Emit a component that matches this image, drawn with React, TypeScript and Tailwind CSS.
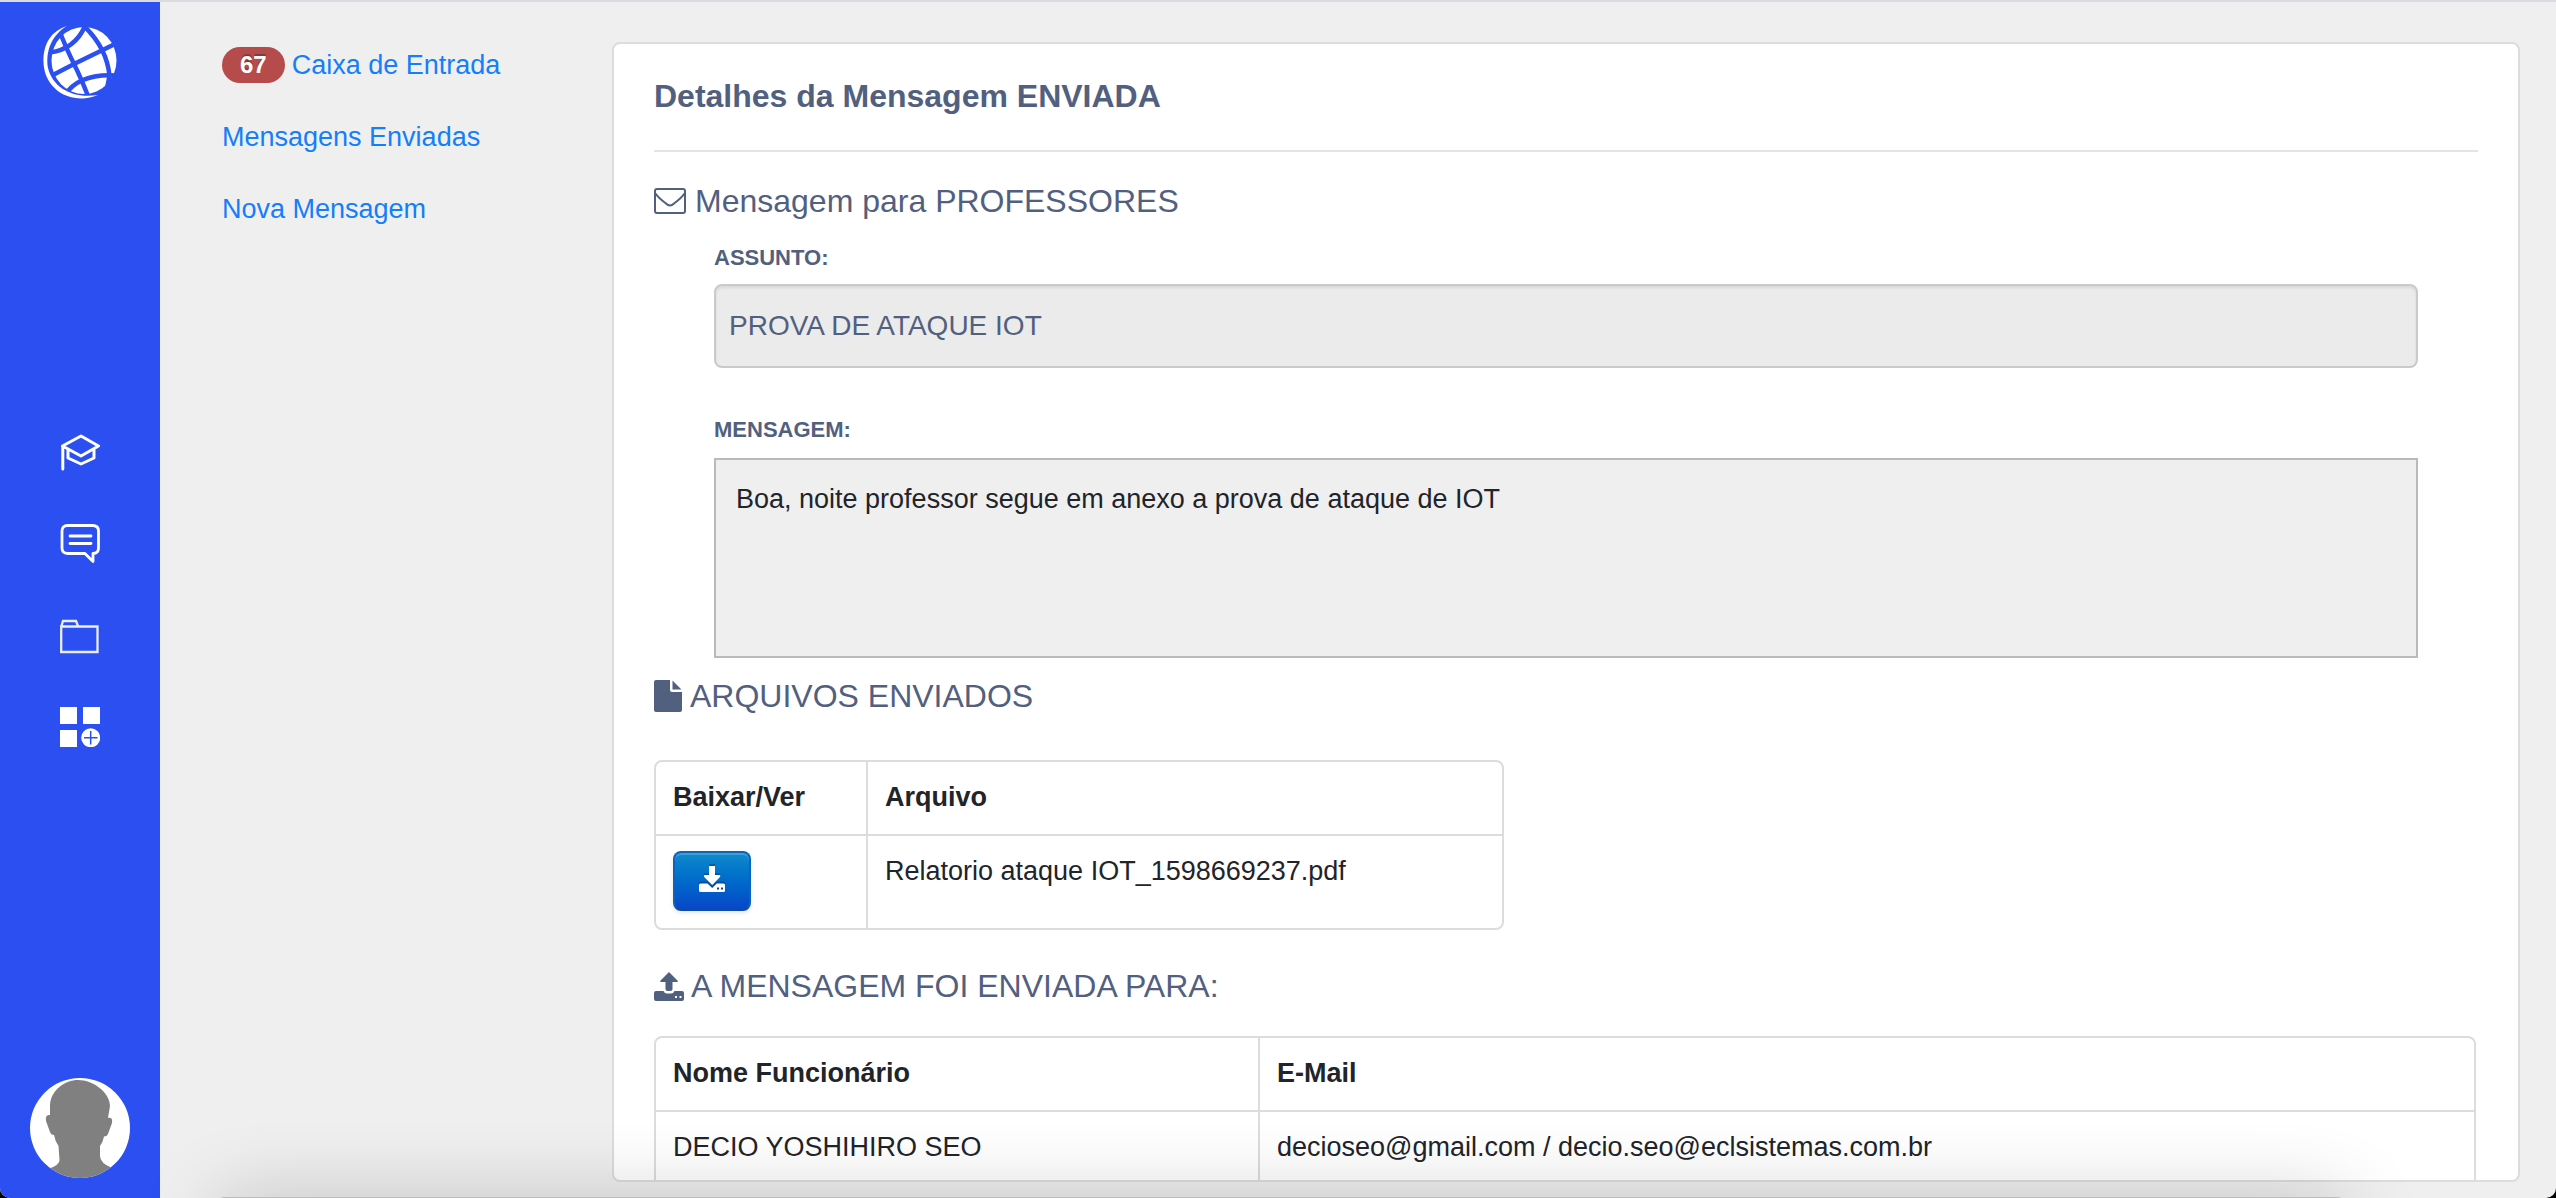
import type { ReactNode } from "react";

function SectionTitle({ icon, children, className }: { icon: ReactNode; children: ReactNode; className?: string }) {
  return (
    <h2 className={"flex items-center text-[32px] leading-[40px] text-[#52607f] " + (className ?? "")}>
      {icon}
      {children}
    </h2>
  );
}

function Logo() {
  return (
    <svg viewBox="0 0 74 74" className="h-[74px] w-[74px]" aria-hidden="true">
      <ellipse cx="41" cy="34.500" rx="32.500" ry="33.500" fill="#fff" />
      <g fill="none" stroke="#2c4ff1" strokeWidth="4.500">
        <path d="M16 4Q24 24 31 38Q38 52 45 70" />
        <path d="M41 0Q64 22 66.500 50L62 72" />
        <path d="M7 26.500Q32 23 42 0" />
        <path d="M8 50 31 38 74 17" />
        <path d="M22 69Q36 47 74 49.500" />
      </g>
      <path d="M68 52 60 66 74 74V52Z" fill="#2c4ff1" />
      <path d="M24 0C8 5 0 18 .5 36C1 58 18 73 40 72.500C46 72 50 71 55 69C30 73 10 62 5 42C2 24 10 8 24 0Z" fill="#fff" />
    </svg>
  );
}

const navItems: { label: string; icon: ReactNode }[] = [
  {
    label: "Acadêmico",
    icon: (
      <svg viewBox="0 0 40 40" className="size-10" fill="none" stroke="#fff" strokeWidth="3" strokeLinejoin="round" strokeLinecap="round">
        <path d="M2.500 15 21 5 38.500 15 21 25Z M2.800 15V38 M8 19V27L21 33 34 27V19" />
      </svg>
    ),
  },
  {
    label: "Mensagens",
    icon: (
      <svg viewBox="0 0 40 40" className="size-10" fill="none" stroke="#fff" strokeWidth="2.800" strokeLinejoin="round" strokeLinecap="round">
        <path d="M7.500 2.500H32.500Q38.500 2.500 38.500 8V25Q38.500 30.500 33 30.500V38.500L25 30.500H7.500Q2 30.500 2 25V8Q2 2.500 7.500 2.500Z M10 13H31 M10 20.500H31" />
      </svg>
    ),
  },
  {
    label: "Arquivos",
    icon: (
      <svg viewBox="0 0 40 40" className="size-10" fill="none" stroke="#fff" strokeOpacity="0.9" strokeWidth="2.300">
        <path d="M1.200 11.500V37H37.500V11.500Z M1.500 11 3 6H16L18 11" />
      </svg>
    ),
  },
  {
    label: "Aplicativos",
    icon: (
      <svg viewBox="0 0 40 40" className="size-10">
        <path d="M0 0H17V17H0Z M23 0H40V17H23Z M0 23H17V40H0Z" fill="#fff" />
        <circle cx="30.700" cy="30.700" r="9.500" fill="#fff" />
        <path d="M30.700 24V37.500 M24 30.700H37.500" stroke="#2c4ff1" strokeWidth="1.500" />
      </svg>
    ),
  },
];

const cell = "border-[#dcdcdc] px-[17px] text-left text-[27px] leading-[40px] align-top pt-[15px] pb-[17px] h-[74px]";

export default function App() {
  return (
    <div className="relative h-screen overflow-hidden bg-black font-['Liberation_Sans',Arial,sans-serif] text-[#212429]">
      <div className="flex h-full overflow-hidden rounded-b-[10px] border-t-2 border-[#dadae0] bg-[#efefef]">
        <aside className="flex w-40 shrink-0 flex-col items-center bg-[#2c4ff1] pt-6 pb-5">
          <a href="#" aria-label="Início"><Logo /></a>
          <nav className="flex grow flex-col items-center justify-center gap-[52px]">
            {navItems.map((n) => (
              <a key={n.label} href="#" aria-label={n.label}>{n.icon}</a>
            ))}
          </nav>
          <button aria-label="Perfil" className="size-[100px] overflow-hidden rounded-full bg-white">
            <svg viewBox="0 0 100 100" className="size-full">
              <path d="M20 37V27C21 12 35 2 48 2C64 2 80 15 80 28L78 40Q83 39 82 45L78 56Q77 58.500 74 58.500Q73 64 70 68V78Q70 85 82 90V100H18V91Q30 87 29.500 82L28.500 68Q25 63 24 57Q21 57 20 54L16 43Q15 36 20 37Z" fill="#808080" />
            </svg>
          </button>
        </aside>
        <nav className="flex w-[452px] shrink-0 flex-col gap-8 pt-[43px] pl-[62px] text-[27px] leading-[40px] text-[#147efb]">
          <a href="#" className="flex items-center gap-[7px]">
            <span className="rounded-full bg-[#b54b4a] px-[18px] text-2xl leading-[36px] font-bold text-white [text-shadow:0_-2px_0_rgba(0,0,0,0.25)]">67</span>
            Caixa de Entrada
          </a>
          <a href="#">Mensagens Enviadas</a>
          <a href="#">Nova Mensagem</a>
        </nav>
        <main className="mt-10 mr-9 mb-4 min-w-0 grow overflow-hidden rounded-lg border-2 border-[#dcdcdc] bg-white px-10 pt-8">
          <h1 className="text-[32px] leading-[40px] font-bold text-[#52607f]">Detalhes da Mensagem ENVIADA</h1>
          <hr className="mt-[34px] mb-[29px] border-t-2 border-[#e4e4e4]" />
          <SectionTitle
            icon={
              <svg viewBox="0 0 32 26" className="mr-[9px] h-[26px] w-8" fill="none" stroke="#52607f" strokeWidth="2">
                <rect x="1" y="1" width="30" height="24" rx="2" />
                <path d="M1.500 5.500Q4 9.500 12 15.500Q16 19.500 20 15.500Q28 9.500 30.500 5.500" />
              </svg>
            }
          >
            Mensagem para PROFESSORES
          </SectionTitle>
          <div className="px-[60px]">
            <label htmlFor="assunto" className="mt-[21px] block text-[22px] leading-[32px] font-bold text-[#52607f]">ASSUNTO:</label>
            <input
              id="assunto"
              readOnly
              value="PROVA DE ATAQUE IOT"
              className="mt-[10px] block h-[84px] w-full rounded-lg border-2 border-[#cacaca] bg-[#ebebeb] px-[13px] text-[28px] text-[#52607f] shadow-[inset_0_2px_3px_rgba(0,0,0,0.08)] outline-none"
            />
            <label htmlFor="mensagem" className="mt-[46px] block text-[22px] leading-[32px] font-bold text-[#52607f]">MENSAGEM:</label>
            <textarea
              id="mensagem"
              readOnly
              value="Boa, noite professor segue em anexo a prova de ataque de IOT"
              className="mt-3 block h-[200px] w-full resize-none border-2 border-[#bababa] bg-[#efefef] px-5 py-[19px] text-[27px] leading-[40px] outline-none"
            />
          </div>
          <SectionTitle
            className="mt-[18px]"
            icon={
              <svg viewBox="0 0 28 32" className="mr-2 h-8 w-7" fill="#52607f">
                <path d="M2 0H16V10Q16 12 18 12H28V30Q28 32 26 32H2Q0 32 0 30V2Q0 0 2 0Z M18.500 0.500 27.500 9.500H18.500Z" />
              </svg>
            }
          >
            ARQUIVOS ENVIADOS
          </SectionTitle>
          <div className="mt-11 w-[850px] overflow-hidden rounded-lg border-2 border-[#dcdcdc]">
            <table className="w-full border-separate border-spacing-0">
              <thead>
                <tr>
                  <th className={cell + " w-[212px] border-r-2 border-b-2"}>Baixar/Ver</th>
                  <th className={cell + " border-b-2"}>Arquivo</th>
                </tr>
              </thead>
              <tbody>
                <tr>
                  <td className={cell + " border-r-2"}>
                    <button
                      aria-label="Baixar"
                      className="flex h-[60px] w-[78px] items-center justify-center rounded-lg border-2 border-x-[#0b62bf] border-t-[#0967b3] border-b-[#0b4e9e] bg-linear-to-b from-[#128acb] to-[#0a46c8] text-white shadow-[inset_0_2px_0_rgba(255,255,255,0.2),0_2px_4px_rgba(0,0,0,0.1)]"
                    >
                      <svg viewBox="0 0 26 26" className="mb-1 size-[26px] overflow-visible drop-shadow-[0_-2px_0_rgba(0,0,0,0.25)]" fill="#fff">
                        <path d="M10 0H16V9H20.500Q22 9.500 21 11L13.200 19 5.200 11Q4.200 9.500 5.700 9H10Z" />
                        <path
                          fillRule="evenodd"
                          d="M1.500 17.500H8.500L13.200 22 17.800 17.500H24.500Q26 17.500 26 19V24.500Q26 26 24.500 26H1.500Q0 26 0 24.500V19Q0 17.500 1.500 17.500Z M18 21.500V23.500H20V21.500Z M22 21.500V23.500H24V21.500Z"
                        />
                      </svg>
                    </button>
                  </td>
                  <td className={cell}>Relatorio ataque IOT_1598669237.pdf</td>
                </tr>
              </tbody>
            </table>
          </div>
          <SectionTitle
            className="mt-9"
            icon={
              <svg viewBox="0 0 30 29" className="mr-[7px] h-[29px] w-[30px]" fill="#52607f">
                <path d="M15 0 23.500 8.500Q24.500 10 23 10H18.500V17Q18.500 19 16.500 19H13.500Q11.500 19 11.500 17V10H7Q5.500 10 6.500 8.500Z" />
                <path
                  fillRule="evenodd"
                  d="M2 19H9.500Q10.500 21.500 13 21.500H17Q19.500 21.500 20.500 19H28Q30 19 30 21V27Q30 29 28 29H2Q0 29 0 27V21Q0 19 2 19Z M21 24V26H23V24Z M25.500 24V26H27.500V24Z"
                />
              </svg>
            }
          >
            A MENSAGEM FOI ENVIADA PARA:
          </SectionTitle>
          <div className="mt-[30px] mr-0.5 overflow-hidden rounded-lg border-2 border-[#dcdcdc]">
            <table className="w-full border-separate border-spacing-0">
              <thead>
                <tr>
                  <th className={cell + " w-[604px] border-r-2 border-b-2"}>Nome Funcionário</th>
                  <th className={cell + " border-b-2"}>E-Mail</th>
                </tr>
              </thead>
              <tbody>
                <tr>
                  <td className={cell + " border-r-2"}>DECIO YOSHIHIRO SEO</td>
                  <td className={cell}>decioseo@gmail.com / decio.seo@eclsistemas.com.br</td>
                </tr>
              </tbody>
            </table>
          </div>
        </main>
      </div>
      <div className="pointer-events-none absolute right-[214px] -bottom-[39px] left-[220px] h-10 rounded-t bg-[#bdbdbd] shadow-[0_10px_80px_rgba(0,0,0,0.3)]" />
    </div>
  );
}
